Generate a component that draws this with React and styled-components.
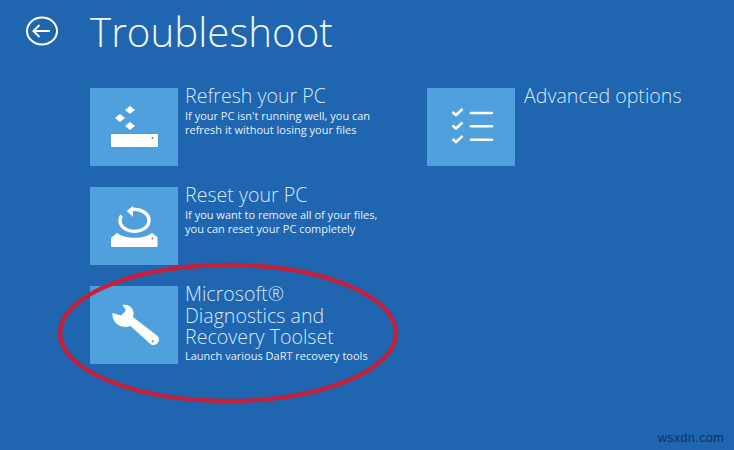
import React from 'react'
import styled, { createGlobalStyle } from 'styled-components'

const Global = createGlobalStyle`
  html, body {
    margin: 0;
    padding: 0;
    background: #1f65b0;
  }
`

const Page = styled.div`
  position: relative;
  width: 734px;
  height: 450px;
  overflow: hidden;
  background: #1f65b0;
  color: #fff;
  font-family: "Open Sans", "Liberation Sans", sans-serif;
`

const Header = styled.div`
  display: flex;
  align-items: center;
  height: 64px;
  padding-left: 26px;
`

const BackIcon = styled.svg`
  width: 32px;
  height: 30px;
  margin: -2px 32px 0 0;
`

const Title = styled.h1`
  margin: 0;
  font-size: 40.3px;
  font-weight: 300;
  line-height: 64px;
  color: #eef6fc;
`

const Columns = styled.div`
  display: flex;
  padding: 24px 0 0 90px;
`

const Column = styled.div`
  display: flex;
  flex: none;
  flex-direction: column;
  gap: 21px;
  width: 337px;
`

const Option = styled.div`
  display: flex;
  align-items: flex-start;
  gap: ${p => p.$gap || 7}px;
`

const Tile = styled.div`
  display: flex;
  align-items: center;
  justify-content: center;
  flex: none;
  width: 88px;
  height: 78px;
  background: #4fa0dc;
`

const Icon = styled.svg`
  flex: none;
  width: 70px;
  height: 56px;
`

const Text = styled.div`
  margin-top: -3px;
`

const Name = styled.div`
  font-size: 19.6px;
  font-weight: 300;
  line-height: 21.5px;
  color: #d4e9f8;
`

const Desc = styled.div`
  margin-top: ${p => p.$gap || 2}px;
  font-size: 11px;
  line-height: 14px;
  color: #e4f1fb;
`

const Circle = styled.svg`
  position: absolute;
  left: 0;
  top: 0;
  pointer-events: none;
`

const Watermark = styled.div`
  position: absolute;
  right: 10px;
  bottom: 5px;
  font-family: "Liberation Sans", sans-serif;
  font-size: 12.5px;
  letter-spacing: 0.4px;
  color: #10305f;
`

const RefreshIcon = () => (
  <Icon viewBox="-1 1 70 56" fill="#fff">
    <path d="M30 8l5 4-5 4-5-4z" />
    <path d="M20 16l5 4-5 4-5-4z" />
    <path d="M30 24l5 4-5 4-5-4z" />
    <rect x="11" y="36" width="47" height="13" rx="1" />
    <circle cx="52.500" cy="40" r="1" fill="#6f8797" />
  </Icon>
)

const ResetIcon = () => (
  <Icon viewBox="-1 0 70 56" fill="none">
    <path d="M32 11.300C41 10.500 49 15.500 49 22.500S41 33.500 34.500 33.500 20 29.500 20 22.500c0-2 .6-3.500 1.600-5" stroke="#fff" strokeWidth="3.400" />
    <path d="M26.700 13l6.300-5v11z" fill="#fff" />
    <path d="M12 39l5-4c4 3 10 4.800 17.500 4.800S48 38 52 35l5.500 4v9a1 1 0 0 1-1 1H12a1 1 0 0 1-1-1v-8z" fill="#fff" />
    <circle cx="52.500" cy="40.500" r="1" fill="#6f8797" />
  </Icon>
)

const WrenchIcon = () => (
  <Icon viewBox="-1 -1 70 56" fill="#fff">
    <path d="M12.500 15L21 17.500 26 12.500 22.500 7C28 6 32.500 9 33.500 14c.3 2-.1 3.500-.5 5L57 37.500c2.500 2 2.500 5 .8 7.300-2 2.700-5.500 3-8 .7L30.500 28c-2.500 1-5.500 1.300-8.500 .5C16 27 12 21.500 12.500 15z" />
    <circle cx="52.700" cy="43.300" r="1.100" fill="#6f8797" />
  </Icon>
)

const ChecksIcon = () => (
  <Icon viewBox="-1 1 70 56" fill="none" stroke="#fff" strokeWidth="2.600">
    <path d="M15.500 14l3.500 3 6.500-6" />
    <path d="M15.500 27.500l3.500 3 6.500-6" />
    <path d="M15.500 41l3.500 3 6.500-6" />
    <g strokeLinecap="round">
      <path d="M34 15h21" />
      <path d="M34 28.300h21" />
      <path d="M34 41.700h21" />
    </g>
  </Icon>
)

export default function App() {
  return (
    <Page>
      <Global />
      <Header>
        <BackIcon viewBox="0 0 32 30" fill="none" stroke="#fff" strokeWidth="2">
          <ellipse cx="16" cy="15" rx="15" ry="13.500" />
          <path d="M24 15H7.500M13.500 9L7.500 15l6 6" />
        </BackIcon>
        <Title>Troubleshoot</Title>
      </Header>
      <Columns>
        <Column>
          <Option>
            <Tile><RefreshIcon /></Tile>
            <Text>
              <Name>Refresh your PC</Name>
              <Desc>If your PC isn't running well, you can<br />refresh it without losing your files</Desc>
            </Text>
          </Option>
          <Option>
            <Tile><ResetIcon /></Tile>
            <Text>
              <Name>Reset your PC</Name>
              <Desc>If you want to remove all of your files,<br />you can reset your PC completely</Desc>
            </Text>
          </Option>
          <Option>
            <Tile><WrenchIcon /></Tile>
            <Text>
              <Name>Microsoft®<br />Diagnostics and<br />Recovery Toolset</Name>
              <Desc $gap={1}>Launch various DaRT recovery tools</Desc>
            </Text>
          </Option>
        </Column>
        <Column>
          <Option $gap={9}>
            <Tile><ChecksIcon /></Tile>
            <Text>
              <Name>Advanced options</Name>
            </Text>
          </Option>
        </Column>
      </Columns>
      <Circle width="734" height="450" viewBox="0 0 734 450" fill="none">
        <ellipse cx="228" cy="333" rx="168" ry="68" stroke="#c5203a" strokeWidth="4.400" />
      </Circle>
      <Watermark>wsxdn.com</Watermark>
    </Page>
  )
}
